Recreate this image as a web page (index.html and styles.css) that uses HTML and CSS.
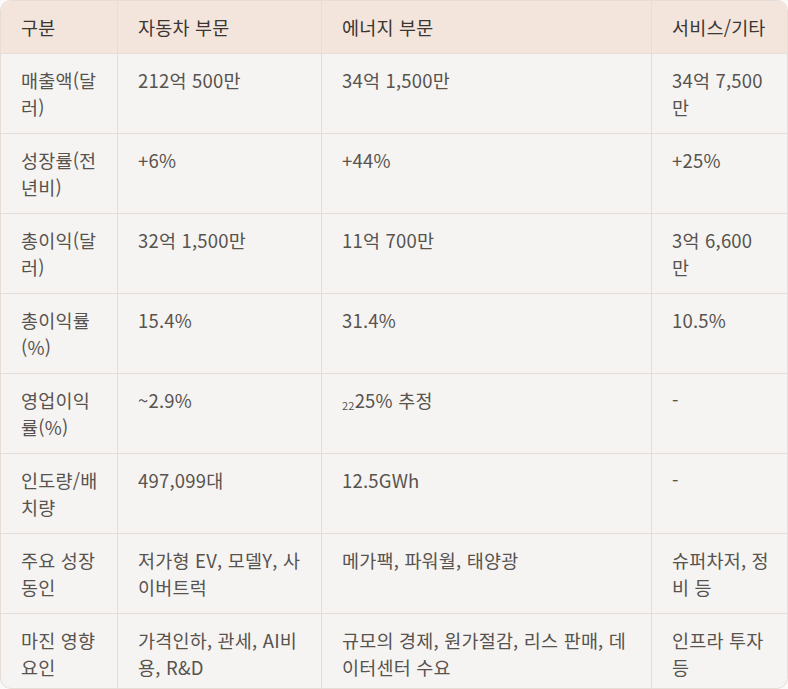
FILE: index.html
```html
<!DOCTYPE html>
<html lang="ko">
<head>
<meta charset="utf-8">
<link rel="stylesheet" href="styles.css">
</head>
<body>
<table class="data">
  <colgroup>
    <col class="c1"><col class="c2"><col class="c3"><col class="c4">
  </colgroup>
  <thead>
    <tr><th>구분</th><th>자동차 부문</th><th>에너지 부문</th><th>서비스/기타</th></tr>
  </thead>
  <tbody>
    <tr><td>매출액(달러)</td><td>212억 500만</td><td>34억 1,500만</td><td>34억 7,500만</td></tr>
    <tr><td>성장률(전년비)</td><td>+6%</td><td>+44%</td><td>+25%</td></tr>
    <tr><td>총이익(달러)</td><td>32억 1,500만</td><td>11억 700만</td><td>3억 6,600만</td></tr>
    <tr><td>총이익률(%)</td><td>15.4%</td><td>31.4%</td><td>10.5%</td></tr>
    <tr><td>영업이익률(%)</td><td>~2.9%</td><td><sub>22</sub>25% 추정</td><td>-</td></tr>
    <tr><td>인도량/배치량</td><td>497,099대</td><td>12.5GWh</td><td>-</td></tr>
    <tr><td>주요 성장 동인</td><td>저가형 EV, 모델Y, 사이버트럭</td><td>메가팩, 파워월, 태양광</td><td>슈퍼차저, 정비 등</td></tr>
    <tr class="last"><td>마진 영향 요인</td><td>가격인하, 관세, AI비용, R&amp;D</td><td>규모의 경제, 원가절감, 리스 판매, 데이터센터 수요</td><td>인프라 투자 등</td></tr>
  </tbody>
</table>
</body>
</html>
```

FILE: styles.css
```css
html, body {
  margin: 0;
  padding: 0;
  background: #faf9f8;
}
body {
  font-family: "Noto Sans CJK KR", "Noto Sans", sans-serif;
  font-size: 18.5px;
  letter-spacing: 0.2px;
  color: #57534f;
}
.data {
  width: 788px;
  border-collapse: separate;
  border-spacing: 0;
  border: 1px solid #e6ddd6;
  border-radius: 11px;
  overflow: hidden;
  background: #f6f4f2;
  table-layout: fixed;
}
.c1 { width: 117px; }
.c2 { width: 204px; }
.c3 { width: 330px; }
.c4 { width: auto; }
th, td {
  text-align: left;
  vertical-align: top;
  padding: 13px 19px 12px 20px;
  line-height: 27px;
  border-right: 1px solid #e6ddd6;
  border-bottom: 1px solid #e6ddd6;
}
th:last-child, td:last-child { border-right: none; padding-right: 18px; }
.last td { border-bottom: none; padding-bottom: 7px; }
th {
  background: #f4e5dc;
  font-weight: 400;
  color: #3a3634;
}
sub {
  font-size: 11px;
  vertical-align: -2px;
  line-height: 0;
}
```
